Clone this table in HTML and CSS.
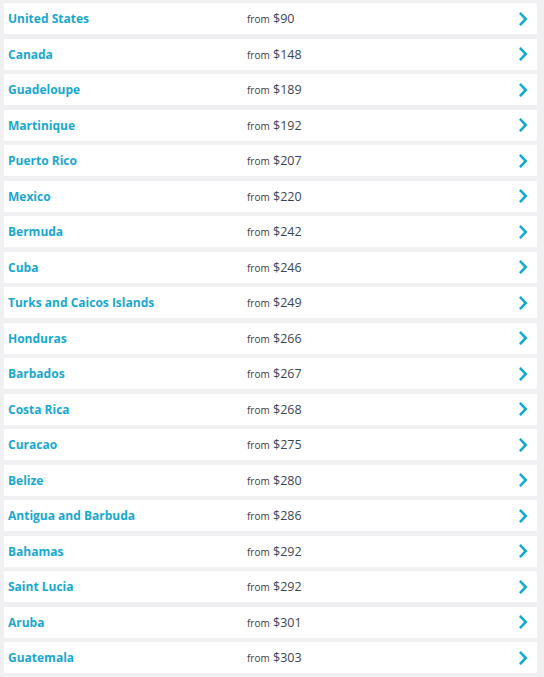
FILE: index.html
```html
<!DOCTYPE html>
<html>
<head>
<meta charset="utf-8">
<link rel="stylesheet" href="styles.css">
</head>
<body>
<ul class="list">
  <li class="row"><a class="name">United States</a><span class="price"><span class="from">from</span> $90</span><svg class="chev" viewBox="0 0 9 14"><path d="M1.8 1.8 L6.8 7 L1.8 12.2"/></svg></li>
  <li class="row"><a class="name">Canada</a><span class="price"><span class="from">from</span> $148</span><svg class="chev" viewBox="0 0 9 14"><path d="M1.8 1.8 L6.8 7 L1.8 12.2"/></svg></li>
  <li class="row"><a class="name">Guadeloupe</a><span class="price"><span class="from">from</span> $189</span><svg class="chev" viewBox="0 0 9 14"><path d="M1.8 1.8 L6.8 7 L1.8 12.2"/></svg></li>
  <li class="row"><a class="name">Martinique</a><span class="price"><span class="from">from</span> $192</span><svg class="chev" viewBox="0 0 9 14"><path d="M1.8 1.8 L6.8 7 L1.8 12.2"/></svg></li>
  <li class="row"><a class="name">Puerto Rico</a><span class="price"><span class="from">from</span> $207</span><svg class="chev" viewBox="0 0 9 14"><path d="M1.8 1.8 L6.8 7 L1.8 12.2"/></svg></li>
  <li class="row"><a class="name">Mexico</a><span class="price"><span class="from">from</span> $220</span><svg class="chev" viewBox="0 0 9 14"><path d="M1.8 1.8 L6.8 7 L1.8 12.2"/></svg></li>
  <li class="row"><a class="name">Bermuda</a><span class="price"><span class="from">from</span> $242</span><svg class="chev" viewBox="0 0 9 14"><path d="M1.8 1.8 L6.8 7 L1.8 12.2"/></svg></li>
  <li class="row"><a class="name">Cuba</a><span class="price"><span class="from">from</span> $246</span><svg class="chev" viewBox="0 0 9 14"><path d="M1.8 1.8 L6.8 7 L1.8 12.2"/></svg></li>
  <li class="row"><a class="name">Turks and Caicos Islands</a><span class="price"><span class="from">from</span> $249</span><svg class="chev" viewBox="0 0 9 14"><path d="M1.8 1.8 L6.8 7 L1.8 12.2"/></svg></li>
  <li class="row"><a class="name">Honduras</a><span class="price"><span class="from">from</span> $266</span><svg class="chev" viewBox="0 0 9 14"><path d="M1.8 1.8 L6.8 7 L1.8 12.2"/></svg></li>
  <li class="row"><a class="name">Barbados</a><span class="price"><span class="from">from</span> $267</span><svg class="chev" viewBox="0 0 9 14"><path d="M1.8 1.8 L6.8 7 L1.8 12.2"/></svg></li>
  <li class="row"><a class="name">Costa Rica</a><span class="price"><span class="from">from</span> $268</span><svg class="chev" viewBox="0 0 9 14"><path d="M1.8 1.8 L6.8 7 L1.8 12.2"/></svg></li>
  <li class="row"><a class="name">Curacao</a><span class="price"><span class="from">from</span> $275</span><svg class="chev" viewBox="0 0 9 14"><path d="M1.8 1.8 L6.8 7 L1.8 12.2"/></svg></li>
  <li class="row"><a class="name">Belize</a><span class="price"><span class="from">from</span> $280</span><svg class="chev" viewBox="0 0 9 14"><path d="M1.8 1.8 L6.8 7 L1.8 12.2"/></svg></li>
  <li class="row"><a class="name">Antigua and Barbuda</a><span class="price"><span class="from">from</span> $286</span><svg class="chev" viewBox="0 0 9 14"><path d="M1.8 1.8 L6.8 7 L1.8 12.2"/></svg></li>
  <li class="row"><a class="name">Bahamas</a><span class="price"><span class="from">from</span> $292</span><svg class="chev" viewBox="0 0 9 14"><path d="M1.8 1.8 L6.8 7 L1.8 12.2"/></svg></li>
  <li class="row"><a class="name">Saint Lucia</a><span class="price"><span class="from">from</span> $292</span><svg class="chev" viewBox="0 0 9 14"><path d="M1.8 1.8 L6.8 7 L1.8 12.2"/></svg></li>
  <li class="row"><a class="name">Aruba</a><span class="price"><span class="from">from</span> $301</span><svg class="chev" viewBox="0 0 9 14"><path d="M1.8 1.8 L6.8 7 L1.8 12.2"/></svg></li>
  <li class="row"><a class="name">Guatemala</a><span class="price"><span class="from">from</span> $303</span><svg class="chev" viewBox="0 0 9 14"><path d="M1.8 1.8 L6.8 7 L1.8 12.2"/></svg></li>
</ul>
</body>
</html>
```
FILE: styles.css
```css
html, body {
  margin: 0;
  padding: 0;
  background: #f0f0f2;
}
body {
  font-family: "Open Sans", "Liberation Sans", sans-serif;
}
.list {
  list-style: none;
  margin: 0;
  padding: 3px 7px 0 4px;
  display: flex;
  flex-direction: column;
  gap: 4.5px;
}
.row {
  height: 31px;
  background: #ffffff;
  display: grid;
  grid-template-columns: 239px 1fr 18px;
  align-items: center;
  padding-left: 4px;
  box-sizing: border-box;
}
.name {
  color: #17a8d1;
  font-weight: 700;
  font-size: 12px;
}
.price {
  color: #3a4656;
  font-size: 12.5px;
}
.from {
  font-size: 10px;
  color: #3d3a44;
}
.chev {
  width: 9px;
  height: 14px;
  fill: none;
  stroke: #17a8d1;
  stroke-width: 2.6;
  stroke-linecap: square;
}
```
